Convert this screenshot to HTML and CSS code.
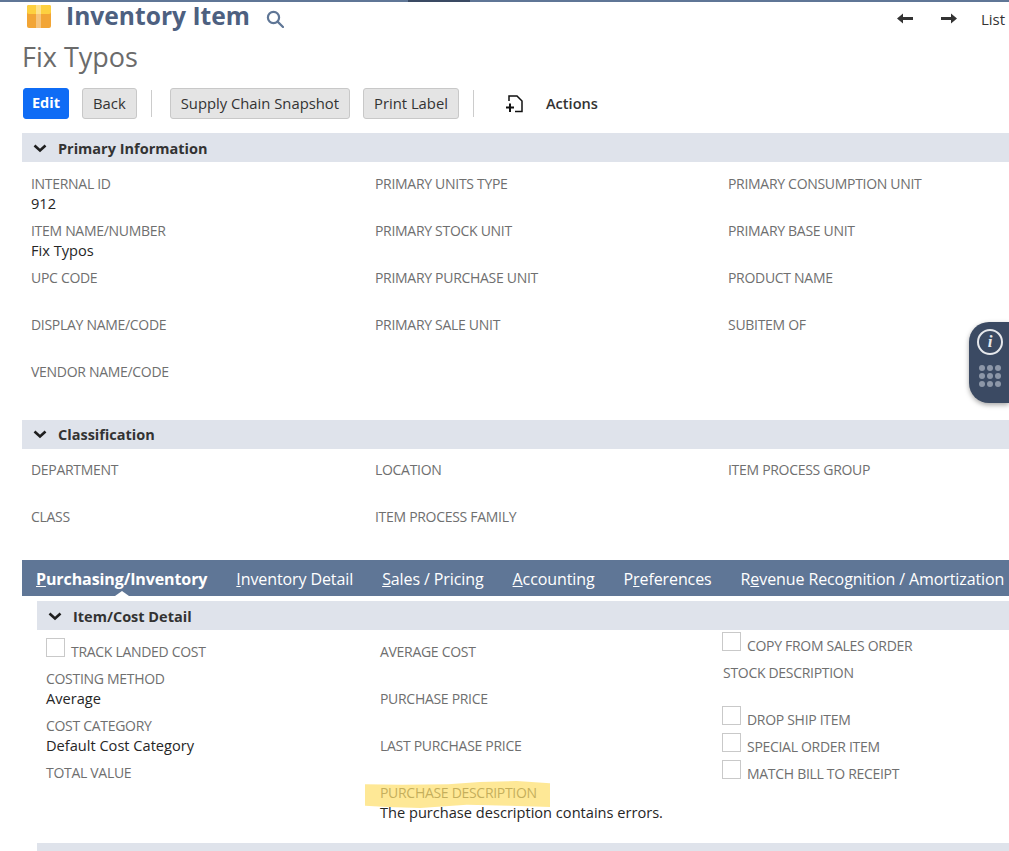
FILE: index.html
```html
<!DOCTYPE html>
<html>
<head>
	<meta charset="utf-8">
	<meta name="viewport" content="width=device-width, initial-scale=1">
	<title>Inventory Item</title>
	<link rel="stylesheet" href="styles.css">
</head>
<body>
	<div class="topbar"><span class="topbar-mark"></span></div>

	<header class="title-row">
		<svg class="box-icon" width="25" height="24" viewBox="0 0 25 24">
			<rect x="1" y="0" width="24" height="23" rx="2" fill="#f2a535"/>
			<rect x="1" y="0" width="24" height="9" rx="2" fill="#fdd03f"/>
			<rect x="10" y="0" width="5" height="9" fill="#fde28c"/>
			<rect x="10" y="9" width="5" height="14" fill="#f6c47c"/>
		</svg>
		<h1 class="record-type">Inventory Item</h1>
		<svg class="search-icon" width="18" height="18" viewBox="0 0 18 18" fill="none" stroke="#5f7696" stroke-width="2.2">
			<circle cx="7.5" cy="7.5" r="5.6"/>
			<path d="M11.6 11.6L17 17" stroke-linecap="round"/>
		</svg>
		<nav class="pager">
			<svg width="16" height="11" viewBox="0 0 16 11" fill="#333"><path d="M0 5.5L6 0.5V4H16V7H6V10.5Z"/></svg>
			<svg width="16" height="11" viewBox="0 0 16 11" fill="#333"><path d="M16 5.5L10 0.5V4H0V7H10V10.5Z"/></svg>
			<a class="pager-list">List</a>
		</nav>
	</header>
	<h2 class="record-name">Fix Typos</h2>

	<div class="toolbar">
		<button class="btn btn-primary">Edit</button>
		<button class="btn">Back</button>
		<span class="divider"></span>
		<button class="btn">Supply Chain Snapshot</button>
		<button class="btn">Print Label</button>
		<span class="divider"></span>
		<svg class="doc-icon" width="18" height="18" viewBox="0 0 18 18" fill="none" stroke="#111" stroke-width="1.5">
			<path d="M4 6V1H12L17 6V16.5H10"/>
			<path d="M1 12.5H9M5 8.5V17" stroke-width="2"/>
		</svg>
		<span class="actions">Actions</span>
	</div>

	<section class="panel">
		<div class="section-head">
			<svg class="chevron" width="14" height="9" viewBox="0 0 14 9" fill="none" stroke="#1f1f1f" stroke-width="2.6"><path d="M1.5 1.5L7 6.5L12.5 1.5"/></svg>
			Primary Information
		</div>
		<div class="field-grid">
			<div class="field"><div class="label">INTERNAL ID</div><div class="value">912</div></div>
			<div class="field"><div class="label">PRIMARY UNITS TYPE</div></div>
			<div class="field"><div class="label">PRIMARY CONSUMPTION UNIT</div></div>
			<div class="field"><div class="label">ITEM NAME/NUMBER</div><div class="value">Fix Typos</div></div>
			<div class="field"><div class="label">PRIMARY STOCK UNIT</div></div>
			<div class="field"><div class="label">PRIMARY BASE UNIT</div></div>
			<div class="field"><div class="label">UPC CODE</div></div>
			<div class="field"><div class="label">PRIMARY PURCHASE UNIT</div></div>
			<div class="field"><div class="label">PRODUCT NAME</div></div>
			<div class="field"><div class="label">DISPLAY NAME/CODE</div></div>
			<div class="field"><div class="label">PRIMARY SALE UNIT</div></div>
			<div class="field"><div class="label">SUBITEM OF</div></div>
			<div class="field"><div class="label">VENDOR NAME/CODE</div></div>
		</div>
	</section>

	<section class="panel classification">
		<div class="section-head">
			<svg class="chevron" width="14" height="9" viewBox="0 0 14 9" fill="none" stroke="#1f1f1f" stroke-width="2.6"><path d="M1.5 1.5L7 6.5L12.5 1.5"/></svg>
			Classification
		</div>
		<div class="field-grid">
			<div class="field"><div class="label">DEPARTMENT</div></div>
			<div class="field"><div class="label">LOCATION</div></div>
			<div class="field"><div class="label">ITEM PROCESS GROUP</div></div>
			<div class="field"><div class="label">CLASS</div></div>
			<div class="field"><div class="label">ITEM PROCESS FAMILY</div></div>
		</div>
	</section>

	<div class="tabs">
		<a class="tab tab-active"><u>P</u>urchasing/Inventory</a>
		<a class="tab"><u>I</u>nventory Detail</a>
		<a class="tab"><u>S</u>ales / Pricing</a>
		<a class="tab"><u>A</u>ccounting</a>
		<a class="tab">P<u>r</u>eferences</a>
		<a class="tab">R<u>e</u>venue Recognition / Amortization</a>
	</div>

	<section class="subpanel">
		<div class="section-head">
			<svg class="chevron" width="14" height="9" viewBox="0 0 14 9" fill="none" stroke="#1f1f1f" stroke-width="2.6"><path d="M1.5 1.5L7 6.5L12.5 1.5"/></svg>
			Item/Cost Detail
		</div>
		<div class="cost-columns">
			<div class="cost-col">
				<div class="check-row check-first"><span class="checkbox"></span><span class="label">TRACK LANDED COST</span></div>
				<div class="field"><div class="label">COSTING METHOD</div><div class="value">Average</div></div>
				<div class="field"><div class="label">COST CATEGORY</div><div class="value">Default Cost Category</div></div>
				<div class="field"><div class="label">TOTAL VALUE</div></div>
			</div>
			<div class="cost-col cost-col-mid">
				<div class="field"><div class="label">AVERAGE COST</div></div>
				<div class="field"><div class="label">PURCHASE PRICE</div></div>
				<div class="field"><div class="label">LAST PURCHASE PRICE</div></div>
				<div class="field">
					<div class="label highlighted">PURCHASE DESCRIPTION</div>
					<div class="value">The purchase description contains errors.</div>
				</div>
			</div>
			<div class="cost-col cost-col-right">
				<div class="check-row check-copy"><span class="checkbox"></span><span class="label">COPY FROM SALES ORDER</span></div>
				<div class="field field-stock"><div class="label">STOCK DESCRIPTION</div></div>
				<div class="check-row"><span class="checkbox"></span><span class="label">DROP SHIP ITEM</span></div>
				<div class="check-row"><span class="checkbox"></span><span class="label">SPECIAL ORDER ITEM</span></div>
				<div class="check-row"><span class="checkbox"></span><span class="label">MATCH BILL TO RECEIPT</span></div>
			</div>
		</div>
		<div class="footer-bar"></div>
	</section>

	<aside class="float-widget">
		<span class="info-ring">i</span>
		<span class="dots">
			<i></i><i></i><i></i><i></i><i></i><i></i><i></i><i></i><i></i>
		</span>
	</aside>
</body>
</html>
```

FILE: styles.css
```css
* {
	box-sizing: border-box;
	margin: 0;
	padding: 0;
}
html, body {height: 100%; overflow: hidden;}
body {font-family: "Open Sans", "Liberation Sans", sans-serif; font-size: 14px; color: #262626; background: #fff; position: relative;}

.topbar {height: 2px; background: #5f7696;}
.topbar-mark {display: block; width: 62px; height: 2px; margin-left: 408px; background: #3a4a63;}

.title-row {display: flex; align-items: center; height: 30px; padding-left: 26px;}
.record-type {font-size: 24.6px; font-weight: 700; color: #4d6080; margin: -3px 0 0 15px; line-height: 30px;}
.search-icon {margin-left: 16px; margin-top: 4px;}
.pager {display: flex; align-items: center; margin-left: auto; height: 30px; padding-top: 3px;}
.pager svg {margin-right: 28px;}
.pager svg:nth-child(2) {margin-right: 24px;}
.pager-list {font-size: 15px; width: 28px; color: #333;}

.record-name {font-size: 27px; font-weight: 400; color: #6b6b6b; line-height: 36px; margin: 7px 0 0 22px;}

.toolbar {display: flex; align-items: center; height: 31px; margin: 13px 0 14px 23px;}
.btn {font: 500 14.8px "Open Sans", "Liberation Sans", sans-serif; height: 31px; padding: 0 10px 2px; border: 1px solid #c8c8c8; border-radius: 3px; background: #e4e4e4; color: #333; margin-right: 13px;}
.btn-primary {background: #0f6cf5; border-color: #0f6cf5; color: #fff; font-weight: 700; font-size: 14.5px; padding: 0 8px 2px;}
.divider {width: 1px; height: 27px; background: #ccc; margin: 0 18px 0 1px;}
.doc-icon {margin-left: 13px;}
.actions {font-weight: 600; font-size: 14.6px; margin: 0 0 2px 23px; color: #333;}

.section-head {display: flex; align-items: center; height: 29px; padding: 1px 0 0 11px; background: #dfe3eb; font-size: 14.5px; font-weight: 700; color: #333;}
.classification .section-head {padding-top: 0;}
.chevron {margin-right: 11px;}

.panel {margin-left: 22px;}
.field-grid {display: grid; grid-template-columns: 344px 353px 1fr; grid-auto-rows: 47px; padding: 12px 0 0 9px;}
.classification {margin-top: 11px;}
.classification .field-grid {padding-top: 11px;}
.label {font-size: 14px; line-height: 19px; letter-spacing: -0.3px; color: #6f6f6f;}
.value {font-size: 14.6px; line-height: 20px; color: #262626;}

.tabs {display: flex; align-items: center; gap: 29px; height: 36px; margin: 6px 0 5px 22px; padding: 1px 0 0 14px; background: #5f7696; white-space: nowrap; position: relative; overflow: hidden;}
.tab {color: #fff; font-size: 16px; letter-spacing: -0.1px;}
.tab-active {font-weight: 700;}
.tabs::after {content: ""; position: absolute; left: 93px; bottom: 0; border: 7px solid transparent; border-top: 0; border-bottom: 5px solid #fff;}

.subpanel {margin-left: 37px;}
.cost-columns {display: grid; grid-template-columns: 334px 343px 1fr; height: 213px; padding-left: 9px;}
.cost-col .field {height: 47px;}
.cost-col-mid {padding-top: 12px;}

.check-row {display: flex; align-items: flex-start; height: 27px;}
.checkbox {width: 19px; height: 19px; border: 1px solid #c9c9c9; background: #fff; margin-right: 6px; flex: none;}
.check-row .label {margin-top: 4px;}
.check-first {height: 39px; padding-top: 8px;}
.check-copy {height: 33px; padding-top: 2px;}
.cost-col-right .checkbox {margin-left: -1px;}
.cost-col .field-stock {height: 43px;}

.highlighted {position: relative;}
.highlighted::before {content: ""; position: absolute; left: -15px; top: -2px; width: 185px; height: 27px; background: rgba(253, 217, 80, 0.6); clip-path: polygon(0 12%, 20% 14%, 45% 12%, 62% 4%, 82% 0, 100% 8%, 100% 96%, 78% 92%, 55% 88%, 30% 100%, 12% 96%, 0 92%);}

.footer-bar {height: 8px; background: #dfe3eb;}

.float-widget {position: absolute; right: 0; top: 322px; width: 40px; height: 81px; background: #3b4a63; border-radius: 20px 0 0 20px; box-shadow: 0 2px 5px rgba(0,0,0,0.35); display: flex; flex-direction: column; align-items: center; padding: 7px 0 0 2px;}
.info-ring {width: 26px; height: 26px; border: 2px solid #e6e8ec; border-radius: 50%; color: #e6e8ec; font: italic 700 17px/22px "Liberation Serif", serif; text-align: center;}
.dots {display: grid; grid-template-columns: repeat(3, 6px); gap: 2px; margin-top: 10px;}
.dots i {width: 6px; height: 6px; border-radius: 50%; background: #8d97a8;}
```
